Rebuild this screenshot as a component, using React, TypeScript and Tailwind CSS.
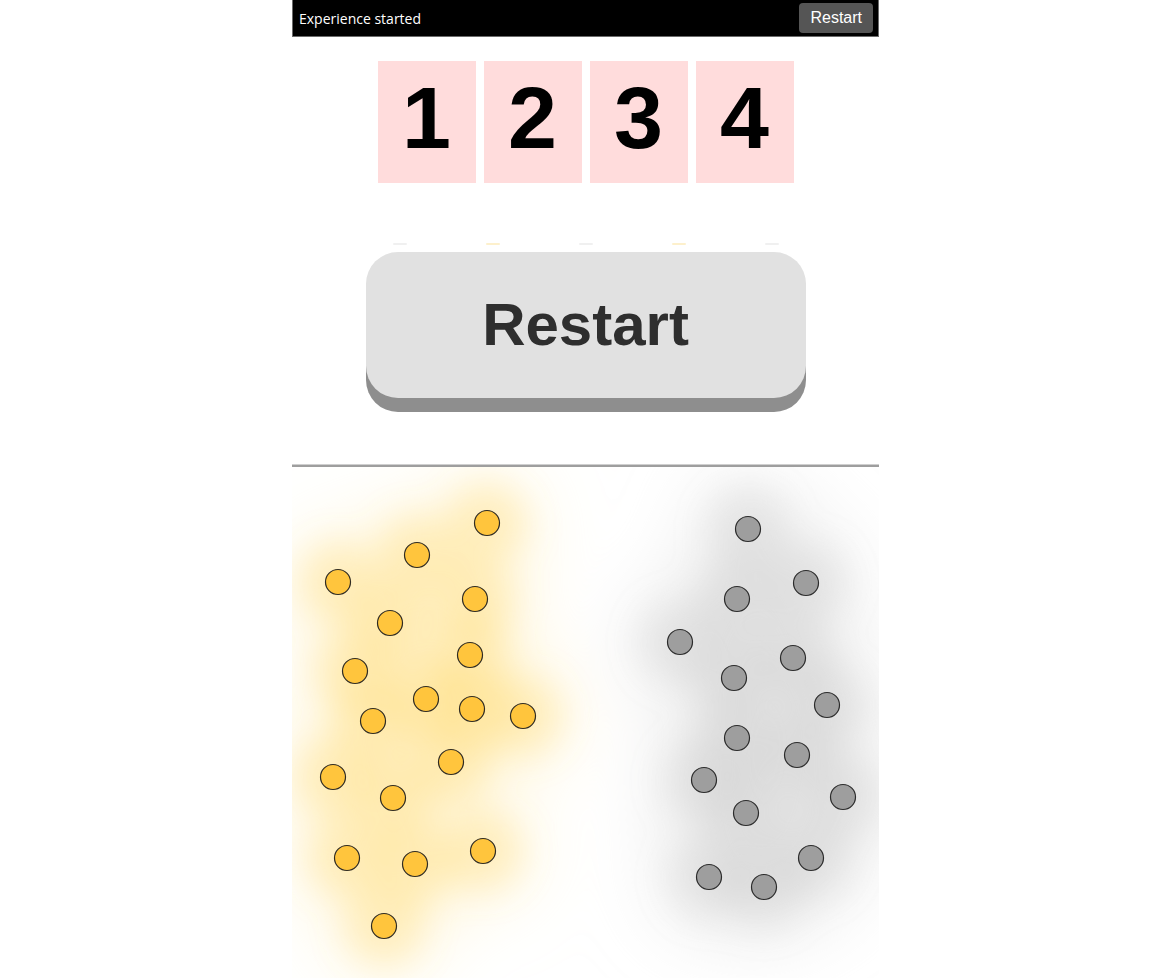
const yellow = [
  [487, 523], [417, 555], [338, 582], [475, 599], [390, 623], [470, 655],
  [355, 671], [426, 699], [472, 709], [523, 716], [373, 721], [451, 762],
  [333, 777], [393, 798], [483, 851], [347, 858], [415, 864], [384, 926],
]

const gray = [
  [748, 529], [806, 583], [737, 599], [680, 642], [793, 658], [734, 678],
  [827, 705], [737, 738], [797, 755], [704, 780], [843, 797], [746, 813],
  [811, 858], [709, 877], [764, 887],
]

// canvas origin in page coordinates
const OX = 292
const OY = 467

function Field() {
  return (
    <svg width="587" height="520" viewBox="0 0 587 520" className="block">
      <defs>
        <filter id="halo" x="-100%" y="-100%" width="300%" height="300%">
          <feGaussianBlur stdDeviation="17" />
        </filter>
        <filter id="wide" x="-100%" y="-100%" width="300%" height="300%">
          <feGaussianBlur stdDeviation="36" />
        </filter>
      </defs>
      <g filter="url(#wide)">
        {yellow.map(([x, y], i) => (
          <circle key={'yw' + i} cx={x - OX} cy={y - OY} r="58" fill="#ffeab0" fillOpacity="0.3" />
        ))}
        {gray.map(([x, y], i) => (
          <circle key={'gw' + i} cx={x - OX} cy={y - OY} r="62" fill="#e0e0e0" fillOpacity="0.42" />
        ))}
      </g>
      <g filter="url(#halo)">
        {yellow.map(([x, y], i) => (
          <circle key={'yh' + i} cx={x - OX} cy={y - OY} r="40" fill="#ffd766" fillOpacity="0.3" />
        ))}
        {gray.map(([x, y], i) => (
          <circle key={'gh' + i} cx={x - OX} cy={y - OY} r="40" fill="#c2c2c2" fillOpacity="0.26" />
        ))}
      </g>
      {yellow.map(([x, y], i) => (
        <circle key={'y' + i} cx={x - OX} cy={y - OY} r="12.5" fill="#ffc53d" stroke="#2e2a22" strokeWidth="1.2" />
      ))}
      {gray.map(([x, y], i) => (
        <circle key={'g' + i} cx={x - OX} cy={y - OY} r="12.5" fill="#9e9e9e" stroke="#2b2b2b" strokeWidth="1.2" />
      ))}
    </svg>
  )
}

export default function App() {
  return (
    <div className="min-h-screen bg-white">
      <div className="mx-auto w-[587px] overflow-hidden">
        <header className="flex h-[37px] items-center justify-between border border-t-0 border-[#6b6b6b] bg-black pl-[6px] pr-[5px]">
          <span className="text-[14px] text-white" style={{ fontFamily: '"Open Sans", sans-serif' }}>
            Experience started
          </span>
          <button className="h-[30px] rounded-[4px] bg-[#555] px-[11px] text-[16px] text-white font-['Liberation_Sans',Arial,sans-serif]">
            Restart
          </button>
        </header>

        <div className="mt-6 flex justify-center gap-2">
          {[1, 2, 3, 4].map((n) => (
            <div
              key={n}
              className="flex h-[122px] w-[98px] items-center justify-center bg-[#ffdcdc] pb-2 text-[88px] font-bold text-black font-['Liberation_Sans',Arial,sans-serif]"
            >
              {n}
            </div>
          ))}
        </div>

        <div className="mx-auto mt-[60px] flex w-[386px] justify-between">
          <div className="h-[2px] w-[14px] rounded-full bg-[#f0f0f0]" />
          <div className="h-[2px] w-[14px] rounded-full bg-[#fdf0cc]" />
          <div className="h-[2px] w-[14px] rounded-full bg-[#f0f0f0]" />
          <div className="h-[2px] w-[14px] rounded-full bg-[#fdf0cc]" />
          <div className="h-[2px] w-[14px] rounded-full bg-[#f0f0f0]" />
        </div>

        <button className="mx-auto mt-[7px] flex h-[146px] w-[440px] items-center justify-center rounded-[32px] bg-[#e1e1e1] text-[60px] font-bold text-[#2e2e2e] shadow-[0_14px_0_#8e8e8e] font-['Liberation_Sans',Arial,sans-serif]">
          Restart
        </button>

        <div className="mt-[66px] h-[3px] border-t border-[#cfcfcf] bg-[#9e9e9e]" />

        <Field />
      </div>
    </div>
  )
}
